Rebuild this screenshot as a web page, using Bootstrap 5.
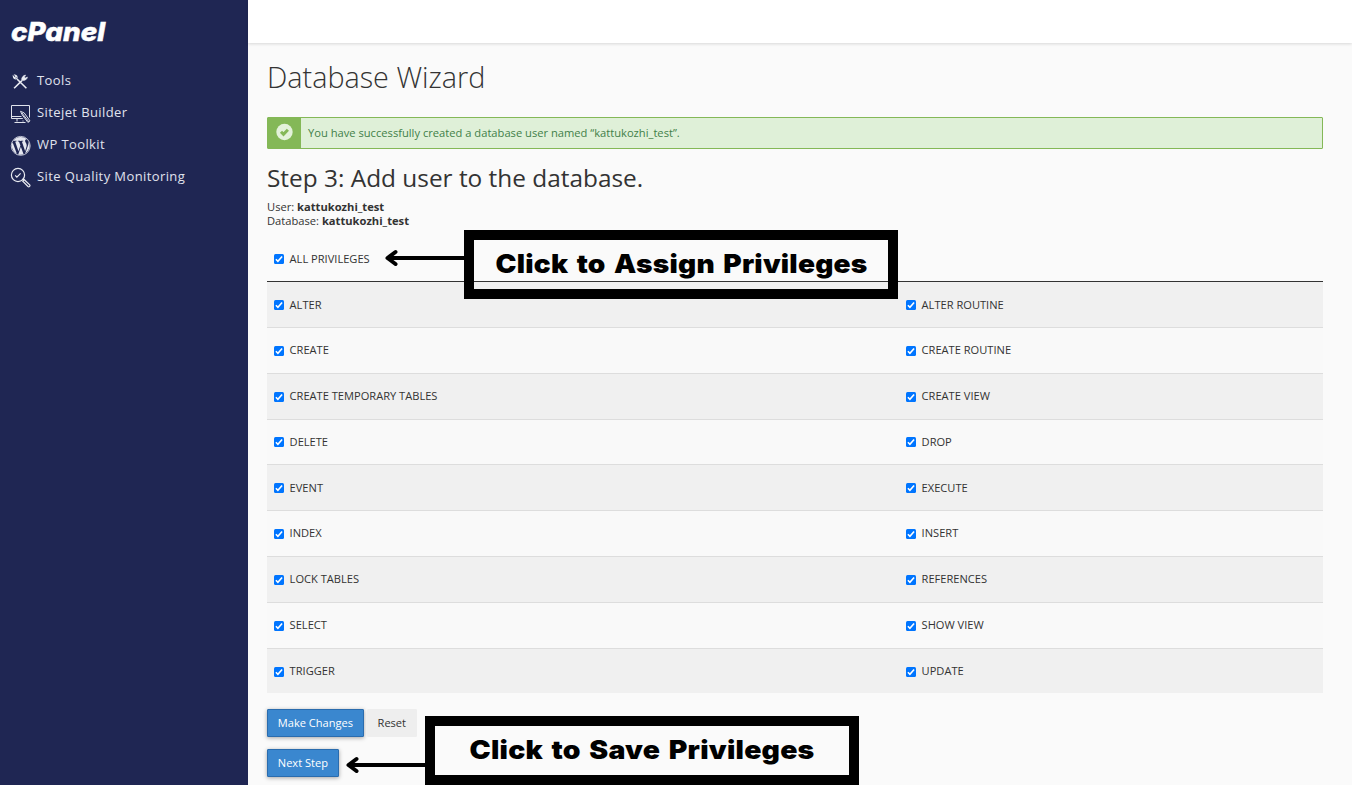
<!DOCTYPE html>
<html lang="en">
<head>
<meta charset="utf-8">
<meta name="viewport" content="width=device-width, initial-scale=1">
<title>cPanel - Database Wizard</title>
<link href="https://cdn.jsdelivr.net/npm/bootstrap@5.3.0/dist/css/bootstrap.min.css" rel="stylesheet">
<style>
body{font-family:"Open Sans","Noto Sans",sans-serif;font-size:11.17px;line-height:14px;color:#333;background:#fafafa}
.app{height:785px}
.sidebar{width:248px;background:#1f2653}
.brand{height:64px;padding:11px 0 0 0}
.side-link{height:32px;padding-left:10px;gap:6px;color:#e0e3ee;font-size:13px;letter-spacing:.4px;line-height:32px}
.side-link svg{width:21px;height:21px;flex:none;position:relative;top:1px}
.topbar{height:43px;background:#fff;box-shadow:0 1px 3px rgba(0,0,0,.14)}
.content{padding:14px 29px 0 19px}
.page-title{font-size:28.75px;font-weight:300;line-height:40px;margin-bottom:20px}
.notice{height:32px;border:1px solid #84b857;border-radius:1px;background:#dff0d8;color:#3f8049}
.notice-icon{width:33px;background:#84b857}
.notice-text{padding-left:7px;line-height:30px}
.step-title{font-size:24.4px;line-height:34px;font-weight:400;margin:12px 0 5px}
.priv-all{height:53px}
.priv-all .priv-label{padding-top:16px}
.priv-table{border-top:1px solid #333}
.priv-row{height:45.86px;border-bottom:1px solid #ddd;background:#f9f9f9}
.priv-row:nth-child(odd){background:#f0f0f0}
.priv-row:last-child{border-bottom:0;height:44.6px}
.first-col{width:632px}
.priv-label{padding-left:6.8px;gap:5.8px;height:45px;font-size:11.1px}
.priv-row:nth-child(n+4) .priv-label{height:44.4px}
.tick{appearance:none;width:10px;height:10px;margin:1px 0 0;border-radius:1.5px;background:#0075ff url("data:image/svg+xml,%3Csvg xmlns='http://www.w3.org/2000/svg' viewBox='0 0 10 10'%3E%3Cpath d='M1.9 5.3l2 2L8.1 2.5' fill='none' stroke='white' stroke-width='1.6'/%3E%3C/svg%3E")}
.btn.cp{font-size:11.07px;line-height:14px;padding:6px 9.8px;border-radius:1px;height:28px}
.cp-blue,.cp-blue:hover{color:#fff;background:#3a87cf;border-color:#2a6cae;box-shadow:0 1px 4px rgba(0,0,0,.35)}
.btn.cp-grey{color:#333;background:#eee;border-color:#eee;margin-left:3px}
.next-line{margin-top:12px}
.callout{width:434px;height:69px;border:10px solid #000;color:#000;font:900 26px/49px Inter,"Open Sans",sans-serif;word-spacing:2.5px;letter-spacing:.2px;white-space:nowrap}
.callout-assign{left:464px;top:230px}
.callout-save{left:425px;top:716px}
.arrow{width:82px;height:20px}
.arrow-assign{left:384px;top:248px}
.arrow-save{left:345px;top:754.5px}
</style>
</head>
<body>
<div class="app d-flex position-relative overflow-hidden">
  <nav class="sidebar d-flex flex-column flex-shrink-0">
    <div class="brand">
      <svg class="d-block" width="140" height="40" role="img" aria-label="cPanel"><text x="11" y="29.5" textLength="94" lengthAdjust="spacingAndGlyphs" font-family="Inter" font-size="26" font-weight="800" font-style="italic" fill="#fff" stroke="#fff" stroke-width=".5">cPanel</text></svg>
    </div>
    <a class="side-link d-flex align-items-center text-decoration-none"><svg viewBox="0 0 21 21" fill="none" stroke="#e9ebf2"><path d="M7 8l9.4 9.2M4.1 17.2l7.8-7.6" stroke-width="1.6"/><path d="M3.3 5.2c.1 2.4 1.8 3.2 3.5 2.4.8-1.5 0-3.4-2-3.6l1.2 1.7-1.2 1.1z" stroke-width="1.1"/><path d="M11.8 9.4c-.7-2.8 1.6-5.2 3.8-5.3l-1.2 2 1 1 2-1.1c0 2.2-2.6 4-5.6 3.4z" fill="#e9ebf2" stroke-width=".6"/></svg><span>Tools</span></a>
    <a class="side-link d-flex align-items-center text-decoration-none"><svg viewBox="0 0 21 21" fill="none" stroke="#dfe2ec" stroke-width="1"><path d="M12.8 15.5H1.5v-13h18v12M1.5 13.5h10M7 15.5v3m6-1v1M4.5 19.5h11M10.5 8.3l3.7 1.6 5.8 8-2.1 1.5-5.7-7.6zM12 10l6.8 8.8"/></svg><span>Sitejet Builder</span></a>
    <a class="side-link d-flex align-items-center text-decoration-none"><svg viewBox="-1 -1.2 25.5 25.5"><circle cx="12" cy="12" r="11.5" fill="none" stroke="#dfe2ec"/><path fill="#e4e6ef" d="M21.47 6.825c.84 1.537 1.318 3.3 1.318 5.175 0 3.979-2.156 7.456-5.363 9.325l3.295-9.527c.615-1.54.82-2.771.82-3.864 0-.405-.026-.78-.07-1.11m-7.981.105c.647-.03 1.232-.105 1.232-.105.582-.075.514-.93-.067-.899 0 0-1.755.135-2.88.135-1.064 0-2.85-.15-2.85-.15-.585-.03-.661.855-.075.885 0 0 .54.061 1.125.09l1.68 4.605-2.37 7.08L5.354 6.9c.649-.03 1.234-.1 1.234-.1.585-.075.516-.93-.065-.896 0 0-1.746.138-2.874.138-.2 0-.438-.008-.69-.015C4.911 3.15 8.235 1.215 12 1.215c2.809 0 5.365 1.072 7.286 2.833-.046-.003-.091-.009-.141-.009-1.06 0-1.812.923-1.812 1.914 0 .89.513 1.643 1.06 2.531.411.72.89 1.643.89 2.977 0 .915-.354 1.994-.821 3.479l-1.075 3.585-3.9-11.61zM12 22.784c-1.059 0-2.081-.153-3.048-.437l3.237-9.406 3.315 9.087c.024.053.05.101.078.149-1.12.393-2.325.607-3.582.607M1.211 12c0-1.564.336-3.05.935-4.39L7.29 21.709C3.694 19.96 1.212 16.271 1.211 12"/></svg><span>WP Toolkit</span></a>
    <a class="side-link d-flex align-items-center text-decoration-none"><svg viewBox="0 0 21 21" fill="none" stroke="#e9ebf2" stroke-width="1.2"><circle cx="8" cy="8" r="6.6"/><path d="M5.2 8.3l1.7 1.8 3.7-3.7M12.4 12.8l1.3-1.3M12.8 14.2l1.5-1.5 5.4 5.2c.8 1-.7 2.5-1.7 1.6z"/></svg><span>Site Quality Monitoring</span></a>
  </nav>
  <div class="flex-grow-1 d-flex flex-column">
    <header class="topbar flex-shrink-0"></header>
    <main class="content">
      <h1 class="page-title">Database Wizard</h1>
      <div class="notice d-flex">
        <div class="notice-icon d-flex justify-content-center flex-shrink-0"><svg class="mt-1" width="17" height="19" viewBox="0 -1.5 17 19"><circle cx="8.5" cy="8.5" r="8.2" fill="#e3f2da"/><path d="M5 8.3l2.5 2.5 4.4-4.5" fill="none" stroke="#84b857" stroke-width="3"/></svg></div>
        <div class="notice-text">You have successfully created a database user named “kattukozhi_test”.</div>
      </div>
      <h2 class="step-title">Step 3: Add user to the database.</h2>
      <div>User: <b>kattukozhi_test</b></div>
      <div>Database: <b>kattukozhi_test</b></div>
      <div class="priv-all"><label class="priv-label d-flex align-items-center"><input type="checkbox" class="tick" checked>ALL PRIVILEGES</label></div>
      <div class="priv-table">
        <div class="priv-row d-flex"><div class="first-col"><label class="priv-label d-flex align-items-center"><input type="checkbox" class="tick" checked>ALTER</label></div><label class="priv-label d-flex align-items-center"><input type="checkbox" class="tick" checked>ALTER ROUTINE</label></div>
        <div class="priv-row d-flex"><div class="first-col"><label class="priv-label d-flex align-items-center"><input type="checkbox" class="tick" checked>CREATE</label></div><label class="priv-label d-flex align-items-center"><input type="checkbox" class="tick" checked>CREATE ROUTINE</label></div>
        <div class="priv-row d-flex"><div class="first-col"><label class="priv-label d-flex align-items-center"><input type="checkbox" class="tick" checked>CREATE TEMPORARY TABLES</label></div><label class="priv-label d-flex align-items-center"><input type="checkbox" class="tick" checked>CREATE VIEW</label></div>
        <div class="priv-row d-flex"><div class="first-col"><label class="priv-label d-flex align-items-center"><input type="checkbox" class="tick" checked>DELETE</label></div><label class="priv-label d-flex align-items-center"><input type="checkbox" class="tick" checked>DROP</label></div>
        <div class="priv-row d-flex"><div class="first-col"><label class="priv-label d-flex align-items-center"><input type="checkbox" class="tick" checked>EVENT</label></div><label class="priv-label d-flex align-items-center"><input type="checkbox" class="tick" checked>EXECUTE</label></div>
        <div class="priv-row d-flex"><div class="first-col"><label class="priv-label d-flex align-items-center"><input type="checkbox" class="tick" checked>INDEX</label></div><label class="priv-label d-flex align-items-center"><input type="checkbox" class="tick" checked>INSERT</label></div>
        <div class="priv-row d-flex"><div class="first-col"><label class="priv-label d-flex align-items-center"><input type="checkbox" class="tick" checked>LOCK TABLES</label></div><label class="priv-label d-flex align-items-center"><input type="checkbox" class="tick" checked>REFERENCES</label></div>
        <div class="priv-row d-flex"><div class="first-col"><label class="priv-label d-flex align-items-center"><input type="checkbox" class="tick" checked>SELECT</label></div><label class="priv-label d-flex align-items-center"><input type="checkbox" class="tick" checked>SHOW VIEW</label></div>
        <div class="priv-row d-flex"><div class="first-col"><label class="priv-label d-flex align-items-center"><input type="checkbox" class="tick" checked>TRIGGER</label></div><label class="priv-label d-flex align-items-center"><input type="checkbox" class="tick" checked>UPDATE</label></div>
      </div>
      <div class="d-flex mt-3"><button class="btn cp cp-blue">Make Changes</button><button class="btn cp cp-grey">Reset</button></div>
      <div class="next-line d-flex"><button class="btn cp cp-blue">Next Step</button></div>
    </main>
  </div>
  <svg class="arrow arrow-assign position-absolute" viewBox="0 0 82 20" fill="none" stroke="#000" stroke-width="4"><path d="M3 10H82"/><path d="M11.5 4L3.5 10l8 6" stroke-linecap="round" stroke-linejoin="round"/></svg>
  <div class="callout callout-assign position-absolute"><svg class="d-block" width="414" height="49"><text x="21.5" y="33" textLength="372" lengthAdjust="spacingAndGlyphs">Click to Assign Privileges</text></svg></div>
  <svg class="arrow arrow-save position-absolute" viewBox="0 0 82 20" fill="none" stroke="#000" stroke-width="4"><path d="M3 10H82"/><path d="M11.5 4L3.5 10l8 6" stroke-linecap="round" stroke-linejoin="round"/></svg>
  <div class="callout callout-save position-absolute"><svg class="d-block" width="414" height="49"><text x="34.5" y="33" textLength="345" lengthAdjust="spacingAndGlyphs">Click to Save Privileges</text></svg></div>
</div>
<script src="https://cdn.jsdelivr.net/npm/bootstrap@5.3.0/dist/js/bootstrap.bundle.min.js"></script>
</body>
</html>
